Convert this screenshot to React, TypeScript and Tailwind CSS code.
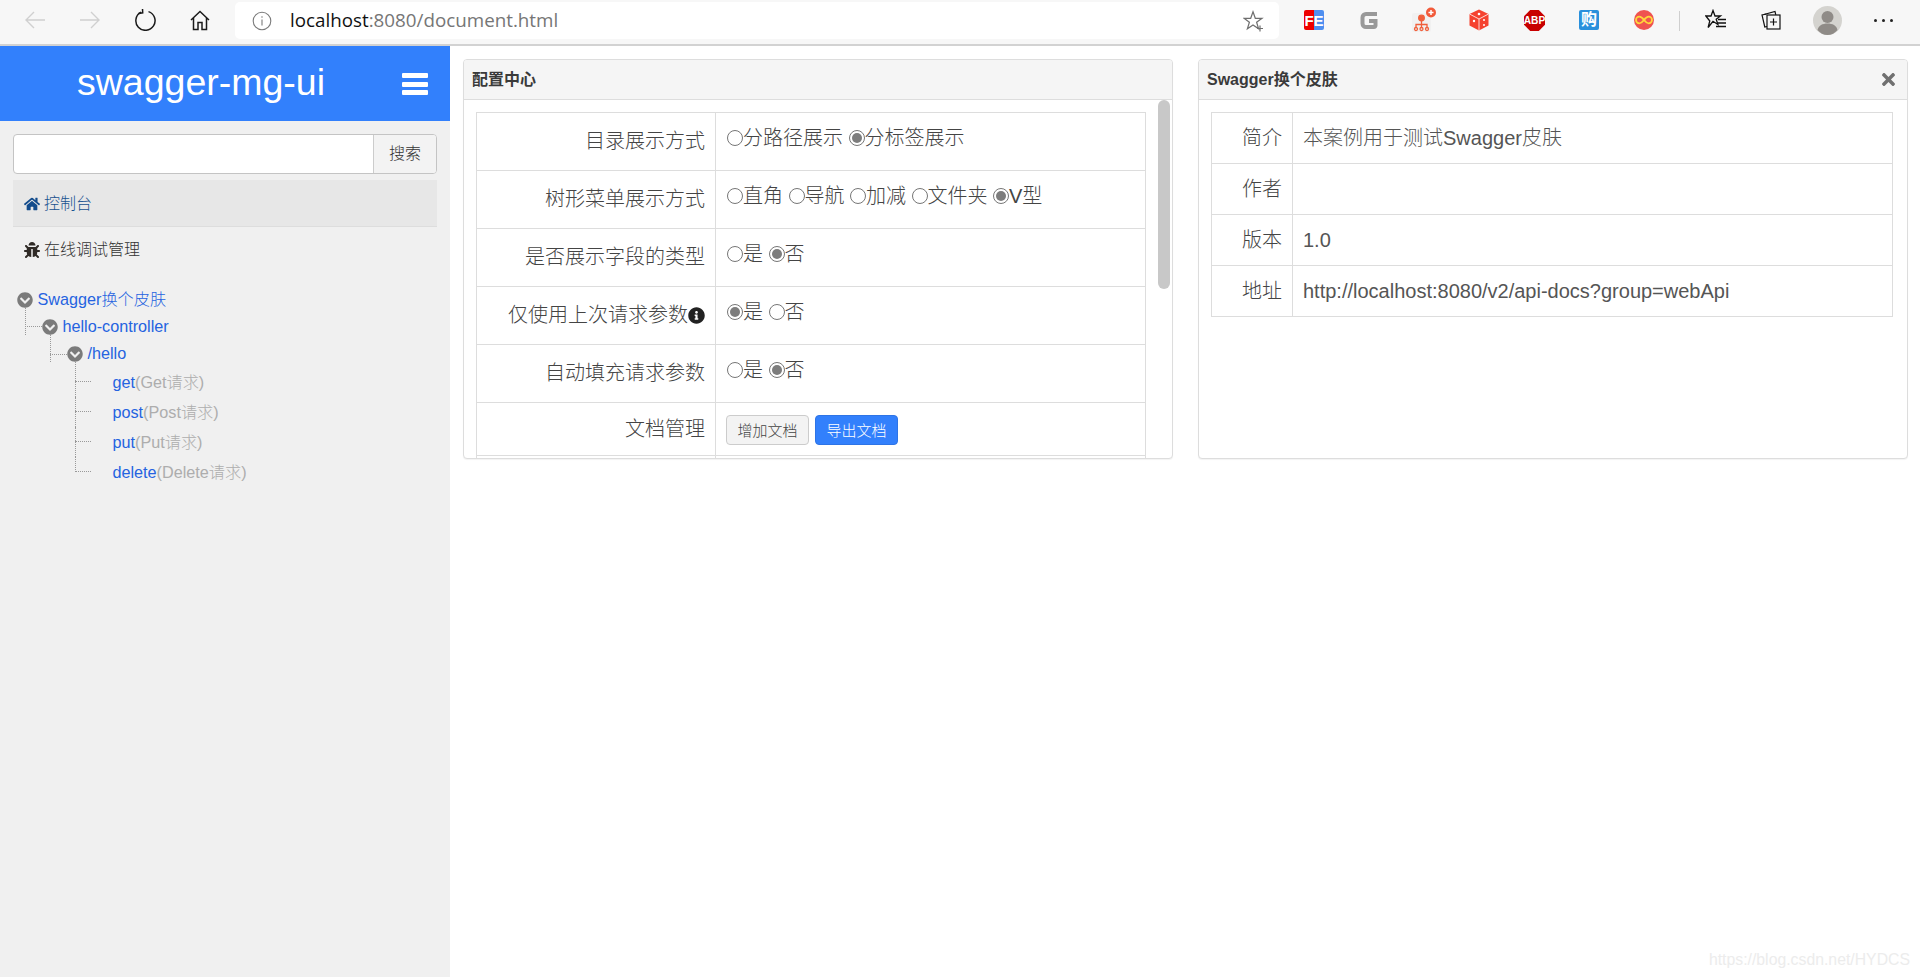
import { FaBug, FaChevronCircleDown, FaHome, FaInfoCircle, FaTimes } from 'react-icons/fa';

const sans = "font-['Liberation_Sans','Noto_Sans_CJK_SC',sans-serif]";

const configRows = [
  { label: '目录展示方式', options: [['分路径展示', false], ['分标签展示', true]] },
  { label: '树形菜单展示方式', options: [['直角', false], ['导航', false], ['加减', false], ['文件夹', false], ['V型', true]] },
  { label: '是否展示字段的类型', options: [['是', false], ['否', true]] },
  { label: '仅使用上次请求参数', info: true, options: [['是', true], ['否', false]] },
  { label: '自动填充请求参数', options: [['是', false], ['否', true]] },
] as { label: string; info?: boolean; options: [string, boolean][] }[];

const infoRows = [
  ['简介', '本案例用于测试Swagger皮肤'],
  ['作者', ''],
  ['版本', '1.0'],
  ['地址', 'http://localhost:8080/v2/api-docs?group=webApi'],
];

const leaves = [
  { method: 'get', desc: '(Get请求)', v: 'top-[-5px] h-[35px]' },
  { method: 'post', desc: '(Post请求)', v: 'top-0 h-[30px]' },
  { method: 'put', desc: '(Put请求)', v: 'top-0 h-[30px]' },
  { method: 'delete', desc: '(Delete请求)', v: 'top-0 h-[15px]' },
];

function Radio({ checked }: { checked: boolean }) {
  return (
    <span className="w-4 h-4 rounded-full border border-[#767676] bg-white flex items-center justify-center shrink-0">
      {checked && <span className="w-[10px] h-[10px] rounded-full bg-[#7d7d7d]" />}
    </span>
  );
}

function ToolSlot({ children }: { children: React.ReactNode }) {
  return <div className="w-[55px] h-full flex items-center justify-center shrink-0">{children}</div>;
}

function BrowserBar() {
  return (
    <div className="h-[46px] bg-[#f7f7f7] border-b-2 border-[#d2d2d2] flex items-start shrink-0">
      <div className="flex h-[40px] pl-[7.5px] mr-[7.5px]">
        <ToolSlot>
          <svg width="22" height="20" viewBox="0 0 22 20" fill="none" stroke="#d0d0d0" strokeWidth="1.4">
            <path d="M21 10H2M10 2l-8 8 8 8" />
          </svg>
        </ToolSlot>
        <ToolSlot>
          <svg width="22" height="20" viewBox="0 0 22 20" fill="none" stroke="#d0d0d0" strokeWidth="1.4">
            <path d="M1 10h19M12 2l8 8-8 8" />
          </svg>
        </ToolSlot>
        <ToolSlot>
          <svg width="22" height="22" viewBox="0 0 22 22" fill="none" stroke="#1a1a1a" strokeWidth="1.5">
            <path d="M7 3.2A9.6 9.6 0 1 0 14.5 2.6" />
            <path d="M7.5 0l.2 4-4 .6" transform="translate(1 -.2)" />
          </svg>
        </ToolSlot>
        <ToolSlot>
          <svg width="20" height="21" viewBox="0 0 20 21" fill="none" stroke="#1a1a1a" strokeWidth="1.5">
            <path d="M1 10 10 1.5 19 10M3.5 8v11.5h4.5V12.5h4v7h4.5V8" />
          </svg>
        </ToolSlot>
      </div>
      <div className="w-[1044px] h-[37px] mt-[2px] bg-white rounded-[5px] flex items-center shrink-0">
        <svg width="20" height="20" viewBox="0 0 20 20" fill="none" stroke="#7a7a7a" strokeWidth="1.1" className="ml-[17px]">
          <circle cx="10" cy="10" r="8.8" />
          <path d="M10 8.5v6M10 5.3v1.4" />
        </svg>
        <span className="ml-[18px] font-['Open_Sans',sans-serif] text-[18.8px] text-[#767676] leading-none">
          <span className="text-[#111]">localhost</span>:8080/document.html
        </span>
        <svg width="22" height="22" viewBox="0 0 22 22" fill="none" stroke="#6f6f6f" strokeWidth="1.2" className="ml-auto mr-[14px]">
          <path d="M10 1.8 12.3 8.3H19l-5.4 4 2 6.5L10 14.9 4.4 18.8l2-6.5L1 8.3h6.7z" />
          <path d="M17 15.5v6M14 18.500h6" />
        </svg>
      </div>
      <div className="flex h-[40px] pl-[7.5px]">
        <ToolSlot>
          <div className={`w-5 h-5 rounded-[2px] overflow-hidden flex bg-[linear-gradient(90deg,#ee0000_50%,#4f8ff0_50%)] items-center justify-center text-white text-[15px] font-bold leading-none ${sans}`}>FE</div>
        </ToolSlot>
        <ToolSlot>
          <svg width="18" height="19" viewBox="0 0 18 19" fill="none" stroke="#999" strokeWidth="4">
            <path d="M17 3H6a3.5 3.5 0 0 0-3.5 3.5v6A3.5 3.5 0 0 0 6 16h8a1.500 1.500 0 0 0 1.5-1.500V10H9" />
          </svg>
        </ToolSlot>
        <ToolSlot>
          <svg width="26" height="26" viewBox="0 0 26 26" fill="none">
            <rect x="1" y="6" width="19" height="19" rx="2" fill="#f1f1f1" />
            <g stroke="#f0603c" strokeWidth="1.3">
              <circle cx="10.5" cy="11" r="2.8" fill="#f0603c" />
              <path d="M10.5 13.5v4M5 21v-3.5h11V21M10.5 17.5V21" />
              <circle cx="5" cy="22" r="1.5" />
              <circle cx="10.5" cy="22" r="1.5" />
              <circle cx="16" cy="22" r="1.5" />
            </g>
            <circle cx="20" cy="5.5" r="5" fill="#f25a3a" />
            <path d="M20 3v5M17.5 5.5h5" stroke="#fff" strokeWidth="1.5" />
          </svg>
        </ToolSlot>
        <ToolSlot>
          <svg width="20" height="22" viewBox="0 0 20 22">
            <path d="M10 .5 19.5 5v11.5L10 21.5.5 16.5V5z" fill="#f5422f" />
            <path d="M.5 5 10 10l9.5-5M10 10v11.5" stroke="#fff" strokeWidth=".8" fill="none" />
            <circle cx="10" cy="5" r="1.3" fill="#fff" />
            <circle cx="5" cy="12" r="1.2" fill="#fff" />
            <circle cx="15" cy="11" r="1" fill="#fff" />
            <circle cx="15" cy="16" r="1" fill="#fff" />
          </svg>
        </ToolSlot>
        <ToolSlot>
          <svg width="21" height="21" viewBox="0 0 21 21">
            <path d="M6.2 0h8.600L21 6.200v8.600L14.800 21H6.200L0 14.800V6.200z" fill="#c80000" />
            <text x="10.5" y="14.3" textAnchor="middle" fill="#fff" fontSize="10.2" fontWeight="700" fontFamily="Liberation Sans">ABP</text>
          </svg>
        </ToolSlot>
        <ToolSlot>
          <div className={`w-5 h-5 rounded-[2px] bg-[#2a90dc] text-white flex items-center justify-center text-[16px] font-bold leading-none ${sans}`}>购</div>
        </ToolSlot>
        <ToolSlot>
          <svg width="20" height="20" viewBox="0 0 20 20" fill="none">
            <circle cx="10" cy="10" r="10" fill="#ef5350" />
            <path d="M10 10c-2-2.600-3.300-3.300-4.700-3.300a3.300 3.300 0 0 0 0 6.600c1.400 0 2.700-.7 4.700-3.300 2 2.600 3.300 3.300 4.700 3.300a3.300 3.300 0 0 0 0-6.600c-1.400 0-2.700.7-4.700 3.300z" stroke="#ffd83a" strokeWidth="1.8" />
          </svg>
        </ToolSlot>
        <div className="w-px h-[20px] mt-[11px] bg-[#cfcfcf] ml-[7.5px] mr-[8px] shrink-0" />
        <ToolSlot>
          <svg width="22" height="22" viewBox="0 0 22 22" fill="none" stroke="#111" strokeWidth="1.3">
            <path d="M8 1.5 10 7h5.500l-4.300 3.300 1.700 5.200L8 12.300 3.100 18.500l1.700-6.500L.8 7H6z" />
            <path d="M13 10.500h8M13 14h8M11 17.500h10" />
          </svg>
        </ToolSlot>
        <ToolSlot>
          <svg width="20" height="20" viewBox="0 0 20 20" fill="none" stroke="#111" strokeWidth="1.2">
            <path d="M5.5 4 1 5l2.800 12 2.200-.5" />
            <path d="M3 4.500 14 1.500l.8 3.300" />
            <rect x="6" y="5" width="13" height="14" />
            <path d="M12.5 8.500v7M9 12h7" />
          </svg>
        </ToolSlot>
        <div className="w-[58px] h-full flex items-center justify-center shrink-0">
          <svg width="29" height="29" viewBox="0 0 29 29">
            <circle cx="14.5" cy="14.5" r="14.5" fill="#d4d3cf" />
            <circle cx="14.5" cy="11" r="6" fill="#8f8b87" />
            <path d="M4.500 24c1-4.500 5-6.500 10-6.500s9 2 10 6.500c-2.500 3-6 5-10 5s-7.500-2-10-5z" fill="#8f8b87" />
          </svg>
        </div>
        <div className="w-[55px] h-full flex items-center justify-center gap-[5px] shrink-0">
          <span className="w-[3px] h-[3px] rounded-full bg-[#222]" />
          <span className="w-[3px] h-[3px] rounded-full bg-[#222]" />
          <span className="w-[3px] h-[3px] rounded-full bg-[#222]" />
        </div>
      </div>
    </div>
  );
}

function Sidebar() {
  return (
    <aside className="w-[450px] shrink-0 bg-[#f0f0f0] font-light">
      <div className="relative h-[75px] bg-[#3280fc] flex items-center justify-center pb-[2px]">
        <span className="text-white text-[37.5px] leading-none mr-[48px]">swagger-mg-ui</span>
        <div className="absolute left-[402px] top-[27px] w-[26px] flex flex-col gap-[3.5px]">
          <span className="h-[5px] bg-white rounded-[1px]" />
          <span className="h-[5px] bg-white rounded-[1px]" />
          <span className="h-[5px] bg-white rounded-[1px]" />
        </div>
      </div>

      <div className="px-[13px] pt-[13px]">
        <div className="flex w-[424px] h-[40px] rounded-[4px] border border-[#c4c4c4] bg-white overflow-hidden">
          <div className="flex-1" />
          <div className="w-[63px] bg-[#f3f3f3] border-l border-[#ccc] flex items-center justify-center text-[16px] text-[#333]">搜索</div>
        </div>
        <div className="mt-[6px] h-[47px] bg-[#e7e7e7] border-b border-[#ddd] flex items-center pl-[11px] pt-px text-[16px] text-[#17508f]">
          <FaHome className="w-[16px] h-[16px] text-[#124b8c]" />
          <span className="ml-[4px]">控制台</span>
        </div>
        <div className="h-[45px] flex items-center pl-[11px] text-[16px] text-[#333]">
          <FaBug className="w-[16px] h-[16px] text-[#2f2a26]" />
          <span className="ml-[4px]">在线调试管理</span>
        </div>
      </div>

      <div className="mt-[14px] text-[16.2px] text-[#2563e0]">
        <div className="h-[27px] flex items-center pl-[17px] gap-[4.5px]">
          <FaChevronCircleDown className="w-4 h-4 text-[#7b7b7b]" />
          <span>Swagger换个皮肤</span>
        </div>
        <div className="relative h-[27px] flex items-center pl-[42px] gap-[4.5px]">
          <span className="absolute left-[25px] top-[-6px] h-[28px] border-l border-dotted border-[#999]" />
          <span className="absolute left-[25px] top-[13px] w-[17px] border-t border-dotted border-[#999]" />
          <FaChevronCircleDown className="w-4 h-4 text-[#7b7b7b]" />
          <span>hello-controller</span>
        </div>
        <div className="relative h-[27px] flex items-center pl-[67px] gap-[4.5px]">
          <span className="absolute left-[50px] top-[-6px] h-[28px] border-l border-dotted border-[#999]" />
          <span className="absolute left-[50px] top-[14px] w-[17px] border-t border-dotted border-[#999]" />
          <FaChevronCircleDown className="w-4 h-4 text-[#7b7b7b]" />
          <span>/hello</span>
        </div>
        {leaves.map((leaf) => (
          <div key={leaf.method} className="relative h-[30px] flex items-center pl-[112.5px]">
            <span className={`absolute left-[75px] border-l border-dotted border-[#999] ${leaf.v}`} />
            <span className="absolute left-[75px] top-[14px] w-[16px] border-t border-dotted border-[#999]" />
            <span>{leaf.method}</span>
            <span className="text-[#adadad]">{leaf.desc}</span>
          </div>
        ))}
      </div>
    </aside>
  );
}

function Panel({ title, close, children }: { title: string; close?: boolean; children: React.ReactNode }) {
  return (
    <section className="w-[710px] h-[400px] bg-white border border-[#ddd] rounded-[4px] shadow-[0_1px_1px_rgba(0,0,0,0.05)] overflow-hidden flex flex-col">
      <header className="h-[40px] shrink-0 bg-[#f5f5f5] border-b border-[#ddd] flex items-center justify-between pl-[8px] pr-[12px]">
        <span className="text-[16px] font-bold text-[#3a3a3a]">{title}</span>
        {close && <FaTimes className="w-[13px] h-[19px] text-[#707070]" />}
      </header>
      {children}
    </section>
  );
}

export default function App() {
  return (
    <div className={`h-[977px] flex flex-col overflow-hidden relative ${sans}`}>
      <BrowserBar />
      <div className="flex flex-1 min-h-0">
        <Sidebar />
        <main className="flex-1 bg-white flex gap-[25px] pl-[13px] pt-[13px] font-light">
          <Panel title="配置中心">
            <div className="relative flex-1 min-h-0 overflow-hidden pt-[12px] pl-[12px]">
              <table className="w-[670px] table-fixed border-collapse text-[20px] text-[#444]">
                <tbody>
                  {configRows.map((row) => (
                    <tr key={row.label} className="h-[58px]">
                      <td className="w-[239px] border border-[#ddd] align-top text-right pr-[10px] pt-[14px] leading-[28px] whitespace-nowrap">
                        {row.label}
                        {row.info && <FaInfoCircle className="inline w-[17px] h-[17px] text-[#222] align-[-2px]" />}
                      </td>
                      <td className="border border-[#ddd] align-top pl-[11px] pt-[11px] leading-[28px]">
                        <div className="flex items-center gap-[5.5px]">
                          {row.options.map(([text, checked]) => (
                            <label key={text} className="flex items-center">
                              <Radio checked={checked} />
                              <span>{text}</span>
                            </label>
                          ))}
                        </div>
                      </td>
                    </tr>
                  ))}
                  <tr className="h-[53px]">
                    <td className="border border-[#ddd] align-top text-right pr-[10px] pt-[12px] leading-[28px]">文档管理</td>
                    <td className="border border-[#ddd] align-top pl-[10px] pt-[12px]">
                      <div className="flex gap-[6px] text-[15px] leading-none">
                        <button className="w-[83px] h-[30px] bg-[#f3f3f3] border border-[#ccc] rounded-[4px] text-[#444]">增加文档</button>
                        <button className="w-[83px] h-[30px] bg-[#3280fc] border border-[#2e74e6] rounded-[4px] text-white">导出文档</button>
                      </div>
                    </td>
                  </tr>
                  <tr className="h-[40px]">
                    <td className="border border-[#ddd]" />
                    <td className="border border-[#ddd]" />
                  </tr>
                </tbody>
              </table>
              <div className="absolute right-[2px] top-0 w-[12px] h-[189px] rounded-[6px] bg-[#c8c8c8]" />
            </div>
          </Panel>
          <Panel title="Swagger换个皮肤" close>
            <div className="p-[12px]">
              <table className="w-[682px] table-fixed border-collapse text-[20px] text-[#444]">
                <tbody>
                  {infoRows.map(([label, value]) => (
                    <tr key={label} className="h-[51px]">
                      <td className="w-[81px] border border-[#ddd] text-right pr-[10px]">{label}</td>
                      <td className="border border-[#ddd] pl-[10px] text-[#555]">{value}</td>
                    </tr>
                  ))}
                </tbody>
              </table>
            </div>
          </Panel>
        </main>
      </div>
      <span className="absolute right-[10px] bottom-[9px] text-[15.8px] text-[#ececec] leading-none">https://blog.csdn.net/HYDCS</span>
    </div>
  );
}
